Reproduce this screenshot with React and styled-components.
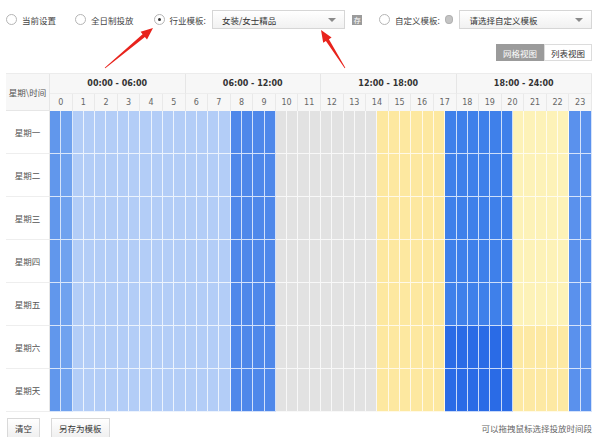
import React from 'react'
import styled, { createGlobalStyle } from 'styled-components'

const GlobalStyle = createGlobalStyle`
  html, body {
    margin: 0;
    padding: 0;
    background: #fff;
  }
  body {
    font-family: "Noto Sans CJK SC", "Noto Sans", sans-serif;
    color: #444;
  }
`

const Page = styled.div`
  position: relative;
  width: 600px;
  height: 437px;
  box-sizing: border-box;
  padding: 10px 8px 0 6px;
  overflow: hidden;
`

const TopBar = styled.div`
  display: flex;
  align-items: center;
  height: 19px;
`

const RadioItem = styled.label`
  display: flex;
  align-items: center;
  font-size: 8.5px;
  color: #444;
  margin-right: ${p => p.$gap || 0}px;
  white-space: nowrap;
`

const RadioCircle = styled.span`
  width: 9px;
  height: 9px;
  border-radius: 50%;
  border: 1px solid #b5b5b5;
  background: #fff;
  margin-right: 5px;
  display: flex;
  align-items: center;
  justify-content: center;
  box-sizing: content-box;

  &::after {
    content: '';
    width: 3px;
    height: 3px;
    border-radius: 50%;
    background: ${p => (p.$checked ? '#333' : 'transparent')};
  }
`

const Select = styled.div`
  width: ${p => p.$w}px;
  height: 19px;
  box-sizing: border-box;
  border: 1px solid #d6d6d6;
  background: linear-gradient(#ffffff, #f1f1f1);
  display: flex;
  align-items: center;
  justify-content: space-between;
  padding: 0 8px 0 9px;
  font-size: 8.5px;
  color: #333;
  margin-right: ${p => p.$mr || 0}px;

  &::after {
    content: '';
    border-left: 4px solid transparent;
    border-right: 4px solid transparent;
    border-top: 4px solid #8a8a8a;
  }
`

const SaveIcon = styled.span`
  width: 10px;
  height: 10px;
  background: #9b9b9b;
  color: #fff;
  font-size: 7px;
  line-height: 10px;
  text-align: center;
  margin-right: 17px;
`

const HelpIcon = styled.span`
  width: 7px;
  height: 7px;
  border-radius: 50%;
  background: #c4c4c4;
  border: 1px solid #b0b0b0;
  margin: 0 6px 0 5px;
`

const ViewRow = styled.div`
  display: flex;
  justify-content: flex-end;
  margin-top: 15px;
`

const ViewButton = styled.span`
  height: 17px;
  line-height: 17px;
  padding: 0 6px;
  font-size: 8.5px;
  border: 1px solid ${p => (p.$active ? '#9b9b9b' : '#dcdcdc')};
  background: ${p => (p.$active ? '#9b9b9b' : '#fff')};
  color: ${p => (p.$active ? '#fff' : '#333')};
  box-sizing: border-box;
`

const Table = styled.div`
  margin-top: 12px;
  display: grid;
  grid-template-columns: 44px repeat(48, 1fr);
  grid-template-rows: 20px 17px repeat(7, 43px);
  border-top: 1px solid #ececec;
  box-sizing: border-box;
`

const Corner = styled.div`
  grid-row: 1 / 3;
  grid-column: 1;
  background: #f7f7f7;
  border-right: 1px solid #e6e6e6;
  border-bottom: 1px solid #e6e6e6;
  display: flex;
  align-items: center;
  justify-content: center;
  font-size: 8.5px;
  color: #555;
`

const RangeHead = styled.div`
  grid-row: 1;
  grid-column: span 12;
  background: #f7f7f7;
  border-right: 1px solid #e6e6e6;
  border-bottom: 1px solid #ededed;
  display: flex;
  align-items: center;
  justify-content: center;
  font-family: "DejaVu Sans", sans-serif;
  font-weight: bold;
  font-size: 8px;
  color: #333;
  &:last-of-type { border-right: none; }
`

const HourHead = styled.div`
  grid-row: 2;
  grid-column: span 2;
  background: #f7f7f7;
  border-right: 1px solid #e9e9e9;
  display: flex;
  align-items: center;
  justify-content: center;
  font-family: "DejaVu Sans", sans-serif;
  font-size: 8px;
  color: #666;
`

const DayLabel = styled.div`
  grid-column: 1;
  display: flex;
  align-items: center;
  justify-content: center;
  font-size: 8.5px;
  color: #555;
  border-bottom: 1px solid #eeeeee;
  border-right: 1px solid #e6e6e6;
`

const Cell = styled.div`
  background: ${p => p.$bg};
  border-right: 1px solid rgba(255, 255, 255, 0.75);
  border-bottom: 1px solid rgba(255, 255, 255, 0.75);
  box-sizing: border-box;
`

const BottomBar = styled.div`
  display: flex;
  align-items: center;
  margin-top: 6px;
  padding-left: 1px;
  height: 20px;
`

const Button = styled.span`
  height: 20px;
  line-height: 18px;
  padding: 0 7px;
  box-sizing: border-box;
  border: 1px solid #d9d9d9;
  background: linear-gradient(#ffffff, #f0f0f0);
  font-size: 8.5px;
  color: #333;
  margin-right: 11px;
`

const Hint = styled.span`
  margin-left: auto;
  font-size: 8.5px;
  color: #666;
`

const Overlay = styled.svg`
  position: absolute;
  left: 0;
  top: 0;
  pointer-events: none;
`

const days = ['星期一', '星期二', '星期三', '星期四', '星期五', '星期六', '星期天']
const ranges = ['00:00 - 06:00', '06:00 - 12:00', '12:00 - 18:00', '18:00 - 24:00']

function cellColor(r, i) {
  const weekend = r >= 5
  if (i < 2) return i === 0 ? '#6197ec' : '#70a2ef'
  if (i < 16) return '#b3cdf7'
  if (i < 20) return '#4f88ea'
  if (i < 29) return '#e2e2e2'
  if (i < 35) return '#fde8a0'
  if (i < 41) return weekend ? '#2a6be6' : '#3f80ea'
  if (i < 46) return weekend ? '#fde9a3' : '#fdf2b8'
  return '#5a91ed'
}

// tapered arrow polygon from tail to tip
function arrowPoints([tx, ty], [hx, hy]) {
  const dx = hx - tx
  const dy = hy - ty
  const len = Math.hypot(dx, dy)
  const ux = dx / len
  const uy = dy / len
  const nx = -uy
  const ny = ux
  const bx = hx - 12 * ux
  const by = hy - 12 * uy
  const pts = [
    [tx + 0.4 * nx, ty + 0.4 * ny],
    [bx + 1.8 * nx, by + 1.8 * ny],
    [bx + 5 * nx, by + 5 * ny],
    [hx, hy],
    [bx - 5 * nx, by - 5 * ny],
    [bx - 1.8 * nx, by - 1.8 * ny],
    [tx - 0.4 * nx, ty - 0.4 * ny],
  ]
  return pts.map(p => p.map(v => v.toFixed(1)).join(',')).join(' ')
}

const App = () => (
  <Page>
    <GlobalStyle />
    <TopBar>
      <RadioItem $gap={19}><RadioCircle />当前设置</RadioItem>
      <RadioItem $gap={20}><RadioCircle />全日制投放</RadioItem>
      <RadioItem $gap={6}><RadioCircle $checked />行业模板:</RadioItem>
      <Select $w={140} $mr={7}>女装/女士精品</Select>
      <SaveIcon>存</SaveIcon>
      <RadioItem><RadioCircle />自定义模板:</RadioItem>
      <HelpIcon />
      <Select $w={139}>请选择自定义模板</Select>
    </TopBar>

    <ViewRow>
      <ViewButton $active>网格视图</ViewButton>
      <ViewButton>列表视图</ViewButton>
    </ViewRow>

    <Table>
      <Corner>星期\时间</Corner>
      {ranges.map(r => <RangeHead key={r}>{r}</RangeHead>)}
      {Array.from({ length: 24 }, (_, h) => <HourHead key={h}>{h}</HourHead>)}
      {days.map((d, r) => (
        <React.Fragment key={d}>
          <DayLabel>{d}</DayLabel>
          {Array.from({ length: 48 }, (_, i) => <Cell key={i} $bg={cellColor(r, i)} />)}
        </React.Fragment>
      ))}
    </Table>

    <BottomBar>
      <Button>清空</Button>
      <Button>另存为模板</Button>
      <Hint>可以拖拽鼠标选择投放时间段</Hint>
    </BottomBar>

    <Overlay width="600" height="437" viewBox="0 0 600 437">
      <polygon points={arrowPoints([105, 68], [153, 28])} fill="#e8231c" />
      <polygon points={arrowPoints([345, 68], [321, 30])} fill="#e8231c" />
    </Overlay>
  </Page>
)

export default App
